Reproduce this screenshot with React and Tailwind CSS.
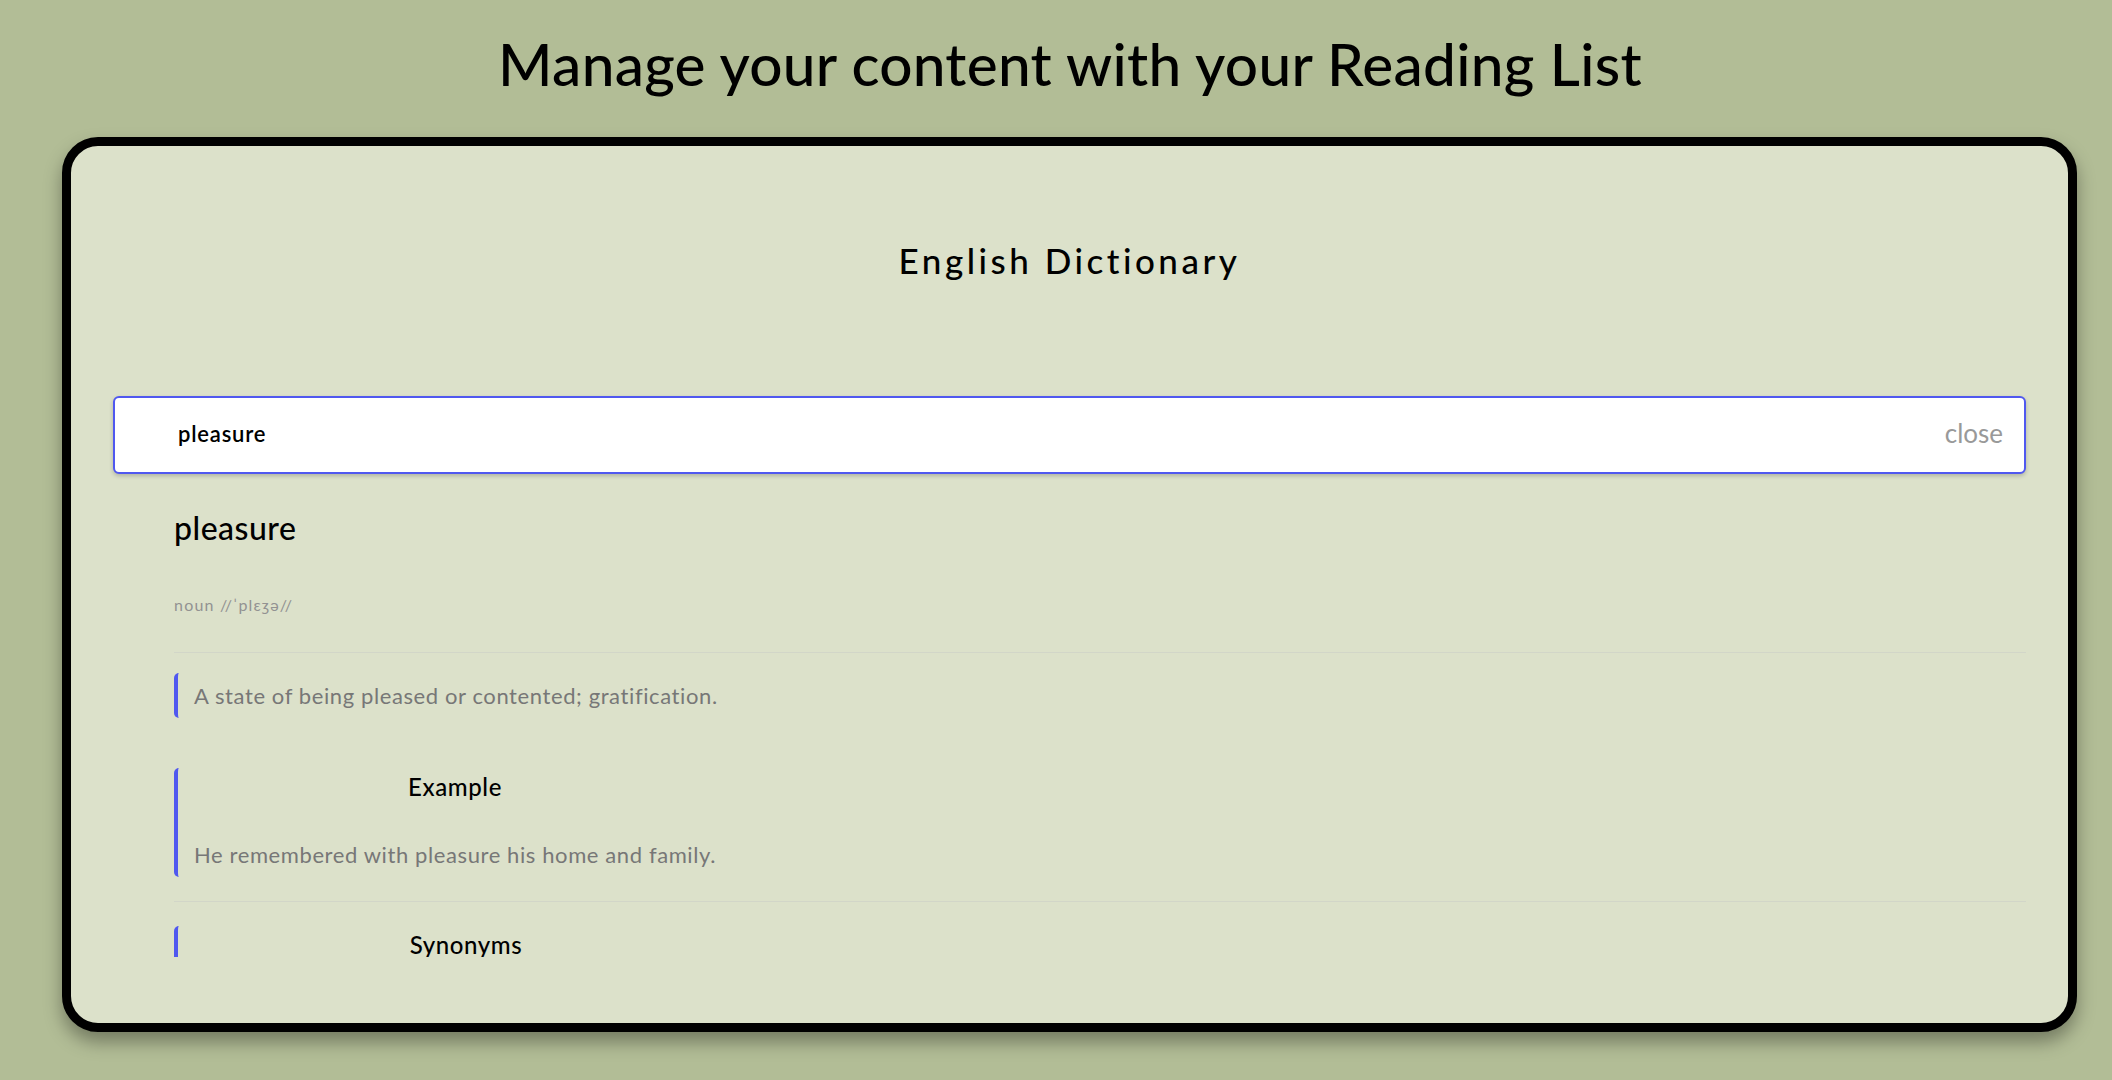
import React from "react";

const entry = {
  word: "pleasure",
  phonetic: "noun //ˈplɛʒə//",
  definition: "A state of being pleased or contented; gratification.",
  example: "He remembered with pleasure his home and family.",
  synonyms: "delight, joy, happiness, enjoyment, satisfaction",
};

export default function App() {
  return (
    <div className="min-h-screen bg-[#b2bd96] pt-[28px] font-['Lato',sans-serif] text-black">
      <h1 className="pl-[28px] text-center text-[58.5px] leading-[70px] font-medium tracking-[0.3px]">
        Manage your content with your Reading List
      </h1>

      {/* Card */}
      <div className="ml-[62px] mt-[39px] h-[895px] w-[2015px] overflow-hidden rounded-[36px] border-[9px] border-black bg-[#dce1ca] px-[42px] shadow-[0_10px_18px_rgba(0,0,0,0.35)]">
        <h2 className="pt-[90px] text-center text-[35px] leading-[48px] font-medium tracking-[3.5px]">
          English Dictionary
        </h2>

        {/* Search */}
        <div className="mt-[112px] flex h-[78px] items-center justify-between rounded-[6px] border-2 border-[#5058ef] bg-white pb-[4px] pl-[63px] pr-[21px] shadow-[0_2px_4px_rgba(0,0,0,0.2)]">
          <span className="text-[22px] font-semibold tracking-[0.8px]">{entry.word}</span>
          <span className="text-[26px] text-[#999]">close</span>
        </div>

        {/* Results */}
        <div className="h-[483px] overflow-hidden pl-[61px]">
          <h3 className="mt-[34px] text-[32px] leading-[40px] font-medium tracking-[0.5px]">{entry.word}</h3>
          <p className="mt-[47px] text-[16px] leading-[20px] tracking-[1.2px] text-[#929292]">{entry.phonetic}</p>

          <div className="mt-[37px] border-t border-[#d2d6c8]" />

          <blockquote className="mt-[20px] w-fit rounded-[5px] border-l-4 border-[#5058ef] py-[10px] pl-[16px] pr-[4px] text-[22px] leading-[25px] tracking-[0.6px] text-[#777]">
            {entry.definition}
          </blockquote>

          <blockquote className="mt-[50px] w-fit rounded-[5px] border-l-4 border-[#5058ef] pt-[4px] pb-[10px] pl-[16px] pr-[4px]">
            <h4 className="text-center text-[24px] leading-[30px] font-medium tracking-[0.6px]">Example</h4>
            <p className="mt-[40px] text-[22px] leading-[25px] tracking-[0.6px] text-[#777]">{entry.example}</p>
          </blockquote>

          <div className="mt-[24px] border-t border-[#d2d6c8]" />

          <blockquote className="mt-[24px] w-[568px] rounded-[5px] border-l-4 border-[#5058ef] pt-[4px] pb-[10px] pl-[16px] pr-[4px]">
            <h4 className="text-center text-[24px] leading-[30px] font-medium tracking-[0.6px]">Synonyms</h4>
            <p className="mt-[40px] text-[22px] leading-[25px] tracking-[0.6px] text-[#777]">{entry.synonyms}</p>
          </blockquote>
        </div>
      </div>
    </div>
  );
}
